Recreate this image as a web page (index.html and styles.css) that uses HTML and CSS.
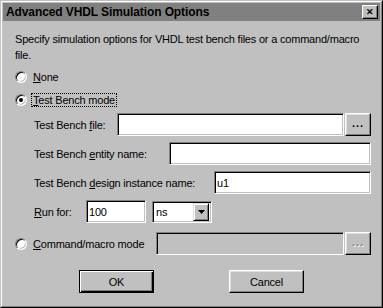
FILE: index.html
```html
<!DOCTYPE html>
<html lang="en">
<head>
    <meta charset="UTF-8">
    <title>Advanced VHDL Simulation Options</title>
    <link rel="stylesheet" href="styles.css">
</head>
<body>
    <div class="window">
        <div class="frame">
            <div class="titlebar">
                <span class="title">Advanced VHDL Simulation Options</span>
                <span class="close">&#x2715;</span>
            </div>
            <div class="content">
                <p class="desc">Specify simulation options for VHDL test bench files or a command/macro<br>file.</p>

                <div class="radio-row row-none">
                    <span class="radio"></span>
                    <span class="radio-label"><u>N</u>one</span>
                </div>
                <div class="radio-row row-tb">
                    <span class="radio checked"></span>
                    <span class="radio-label focus"><u>T</u>est Bench mode</span>
                </div>

                <div class="row row-file">
                    <span class="label">Test Bench <u>f</u>ile:</span>
                    <input class="field w-file" type="text" value="">
                    <span class="btn small">...</span>
                </div>
                <div class="row row-entity">
                    <span class="label">Test Bench <u>e</u>ntity name:</span>
                    <input class="field w-entity" type="text" value="">
                </div>
                <div class="row row-inst">
                    <span class="label">Test Bench <u>d</u>esign instance name:</span>
                    <input class="field w-inst" type="text" value="u1">
                </div>
                <div class="row row-run">
                    <span class="label run-label"><u>R</u>un for:</span>
                    <input class="field w-run" type="text" value="100">
                    <div class="combo">
                        <span class="combo-text">ns</span>
                        <span class="combo-arrow"><svg width="7" height="4" viewBox="0 0 7 4"><path d="M0 0h7L3.5 4z" fill="#000"/></svg></span>
                    </div>
                </div>

                <div class="radio-row row-cmd">
                    <span class="radio"></span>
                    <span class="radio-label"><u>C</u>ommand/macro mode</span>
                    <input class="field disabled w-cmd" type="text" value="" disabled>
                    <span class="btn small disabled-btn">...</span>
                </div>
            </div>
            <div class="buttons">
                <span class="btn default">OK</span>
                <span class="btn">Cancel</span>
            </div>
        </div>
    </div>
</body>
</html>
```

FILE: styles.css
```css
body { margin: 0; background: #c0c0c0; font-family: "Liberation Sans", Arial, sans-serif; font-size: 11px; letter-spacing: -0.2px; color: #000; }
u { text-decoration: underline; text-underline-offset: 1px; }

.window { width: 383px; height: 308px; box-sizing: border-box; border: 1px solid; border-color: #c0c0c0 #000 #000 #c0c0c0; }
.frame { height: 100%; box-sizing: border-box; border: 1px solid; border-color: #fff #808080 #808080 #fff; padding: 1px; }

.titlebar { height: 18px; background: #808080; display: flex; align-items: center; justify-content: space-between; padding: 0 2px 0 3px; }
.title { font-weight: bold; font-size: 12px; letter-spacing: -0.1px; color: #000; }
.close { width: 16px; height: 14px; box-sizing: border-box; background: #c0c0c0; border: 1px solid; border-color: #fff #000 #000 #fff; box-shadow: inset -1px -1px #808080; font-size: 9px; font-weight: bold; line-height: 12px; text-align: center; letter-spacing: 0; }

.content { padding: 0 9px 0 12px; }
.desc { margin: 10px 0 0; line-height: 16px; white-space: nowrap; }

.radio-row { display: flex; align-items: center; height: 14px; }
.row-none { margin-top: 7px; }
.row-tb { margin-top: 9px; }
.row-cmd { margin-top: 9px; height: 23px; }
.radio { width: 12px; height: 12px; box-sizing: border-box; border-radius: 50%; background: #fff; border: 1px solid; border-color: #808080 #fff #fff #808080; box-shadow: inset 1px 1px #000, inset -1px -1px #c0c0c0; position: relative; }
.radio.checked::after { content: ""; position: absolute; left: 3px; top: 3px; width: 4px; height: 4px; border-radius: 50%; background: #000; }
.radio-label { margin-left: 4px; padding: 0 1px; line-height: 12px; border: 1px solid transparent; }
.radio-label.focus { border: 1px dotted #000; }

.row { display: flex; align-items: center; height: 23px; padding-left: 19px; }
.row-file, .row-entity, .row-inst, .row-run { margin-top: 6px; }

.field { box-sizing: border-box; height: 23px; margin: 0; padding: 0 2px; font: inherit; letter-spacing: inherit; color: #000; background: #fff; border: 1px solid; border-color: #808080 #fff #fff #808080; box-shadow: inset 1px 1px #000, inset -1px -1px #c0c0c0; outline: none; }
.field.disabled { background: #c0c0c0; }
.w-file { width: 227px; margin-left: auto; }
.w-entity { width: 202px; margin-left: auto; }
.w-inst { width: 157px; margin-left: auto; }
.w-cmd { width: 188px; margin-left: auto; }
.run-label { width: 52px; }
.w-run { width: 60px; }

.combo { width: 60px; height: 22px; box-sizing: border-box; margin-left: 6px; display: flex; align-items: center; background: #fff; border: 1px solid; border-color: #808080 #fff #fff #808080; box-shadow: inset 1px 1px #000, inset -1px -1px #c0c0c0; padding: 2px; }
.combo-text { flex: 1; padding-left: 1px; }
.combo-arrow { width: 16px; height: 18px; box-sizing: border-box; background: #c0c0c0; border: 1px solid; border-color: #dfdfdf #000 #000 #dfdfdf; box-shadow: inset 1px 1px #fff, inset -1px -1px #808080; display: flex; align-items: center; justify-content: center; }

.btn { box-sizing: border-box; height: 23px; display: inline-flex; align-items: center; justify-content: center; background: #c0c0c0; border: 1px solid; border-color: #fff #000 #000 #fff; box-shadow: inset -1px -1px #808080, inset 1px 1px #dfdfdf; width: 75px; }
.btn.small { width: 26px; margin-left: 1px; font-weight: bold; letter-spacing: 1px; padding-bottom: 3px; }
.btn.disabled-btn { color: #808080; text-shadow: 1px 1px #fff; }
.btn.default { border-color: #000; box-shadow: inset 1px 1px #fff, inset -1px -1px #000, inset -2px -2px #808080; }

.buttons { display: flex; justify-content: center; gap: 75px; margin-top: 15px; }
```
